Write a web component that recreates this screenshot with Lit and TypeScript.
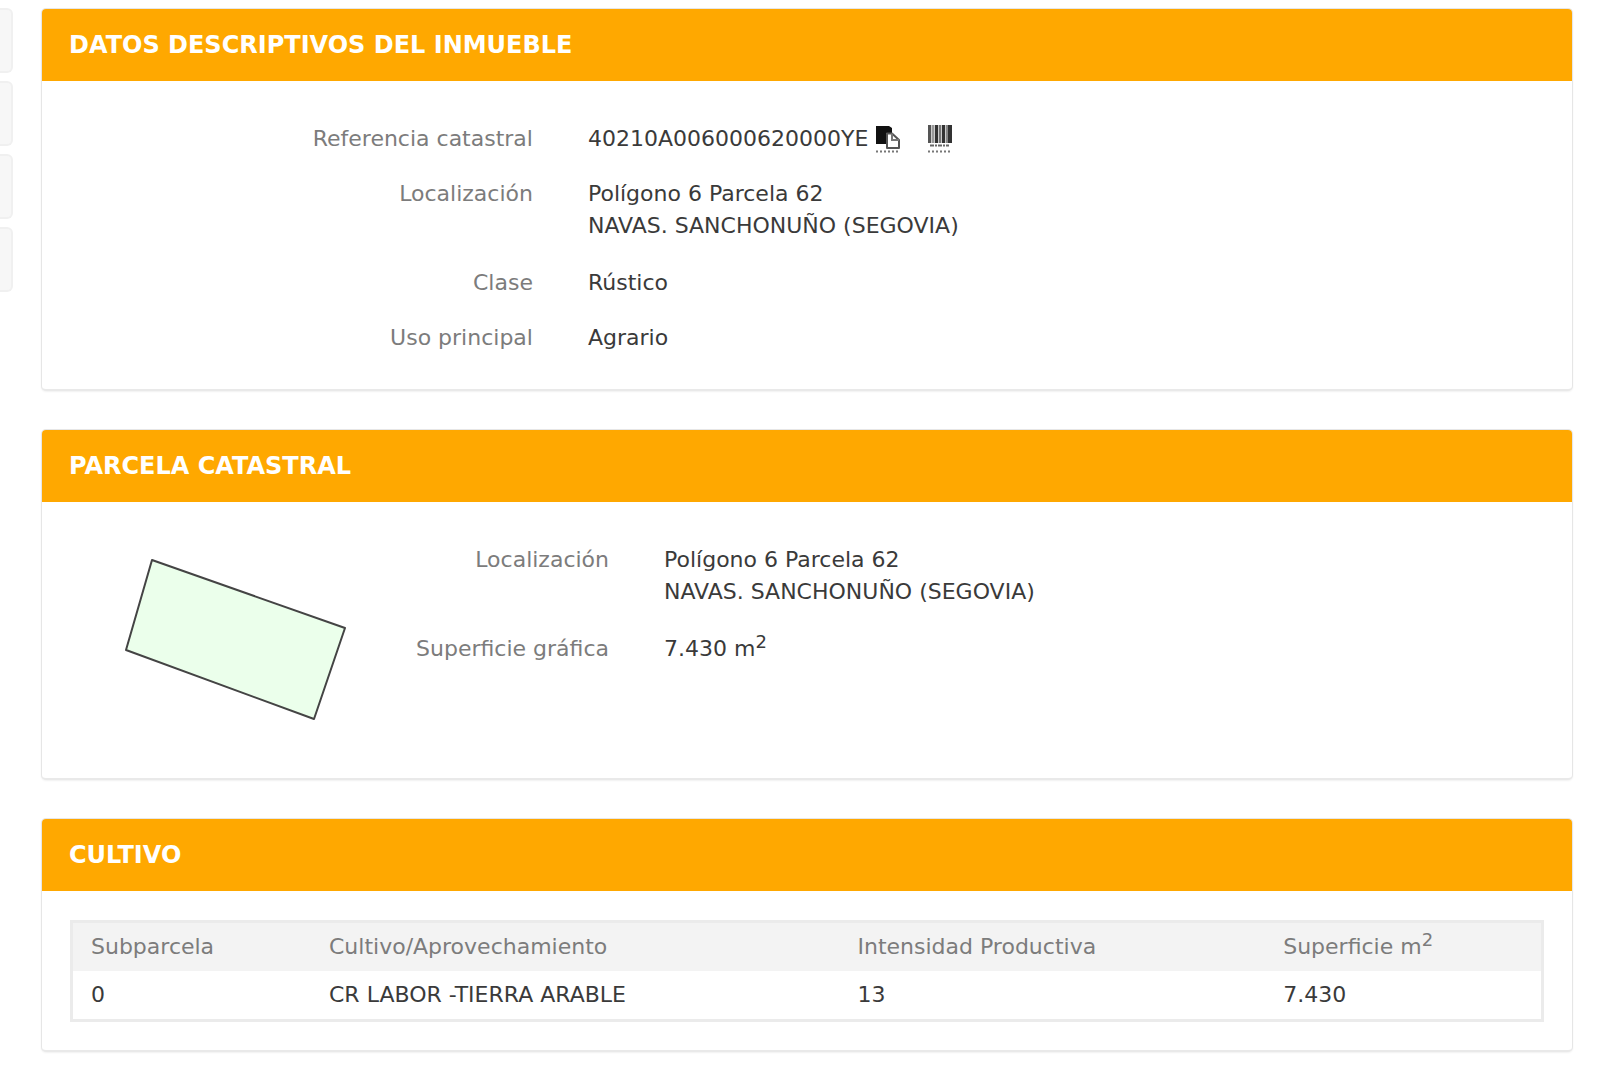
import { LitElement, html, css, svg } from "lit";
import { customElement, property } from "lit/decorators.js";

const LOCATION = ["Polígono 6 Parcela 62", "NAVAS. SANCHONUÑO (SEGOVIA)"];

const CROPS = [
  { id: "0", use: "CR LABOR -TIERRA ARABLE", intensity: "13", area: "7.430" },
];

/* x position, width and shade of each bar in the barcode glyph */
const BARS: [number, number, string][] = [
  [1, 3, "#555"],
  [5, 2, "#999"],
  [8, 3, "#333"],
  [12, 2, "#777"],
  [15, 3, "#333"],
  [19, 2, "#888"],
  [21, 4, "#333"],
];

@customElement("data-panel")
class DataPanel extends LitElement {
  @property() heading = "";

  static styles = css`
    :host {
      display: block;
      background: #fff;
      border: 1px solid #e6e6e6;
      border-bottom: 2px solid #e9e9e9;
      border-radius: 5px;
      box-shadow: 0 1px 2px rgba(0, 0, 0, 0.06);
    }
    .title {
      margin: 0;
      padding: 20px 27px;
      border-radius: 4px 4px 0 0;
      background: #ffa800;
      color: #fff;
      font-size: 24px;
      font-weight: 700;
      line-height: 32px;
    }
  `;

  render() {
    return html`
      <h2 class="title">${this.heading}</h2>
      <slot></slot>
    `;
  }
}

@customElement("app-root")
class AppRoot extends LitElement {
  static styles = css`
    :host {
      display: block;
      box-sizing: border-box;
      min-height: 100vh;
      background: #fff;
      color: #3a3a3a;
      font-family: Verdana, "DejaVu Sans", sans-serif;
      font-size: 22px;
      line-height: 32px;
    }
    .page {
      display: flex;
      gap: 28px;
      padding: 8px 25px 28px 0;
    }
    .rail {
      display: flex;
      flex: none;
      flex-direction: column;
      gap: 8px;
      width: 13px;
    }
    .tab {
      box-sizing: border-box;
      height: 65px;
      border: 2px solid #f0f0f0;
      border-left: 0;
      border-radius: 0 6px 6px 0;
      background: #f7f7f7;
    }
    .panels {
      display: flex;
      flex: 1;
      flex-direction: column;
      gap: 38px;
      min-width: 0;
    }
    .fields {
      display: grid;
      grid-template-columns: 32% 1fr;
      align-content: start;
      gap: 23px 55px;
      margin: 0;
      padding: 42px 0 35px 2px;
    }
    .fields.beside {
      grid-template-columns: 224px 1fr;
      padding: 0;
    }
    .label {
      color: #7c7c7c;
      text-align: right;
    }
    .value {
      margin: 0;
    }
    .value.lines {
      padding-bottom: 2px;
    }
    .line {
      display: block;
    }
    .reference {
      display: flex;
      align-items: center;
    }
    .action {
      display: block;
      width: 26px;
      height: 32px;
      margin-left: 7px;
      padding: 0;
      border: 0;
      background: none;
      cursor: pointer;
    }
    .action + .action {
      margin-left: 26px;
    }
    .icon {
      display: block;
    }
    .parcel {
      display: grid;
      grid-template-columns: 262px 1fr;
      gap: 0 39px;
      padding: 42px 0 54px 42px;
    }
    .map {
      display: block;
      width: 262px;
      height: 180px;
    }
    sup {
      font-size: 18px;
      line-height: 0;
    }
    .crops {
      padding: 29px 28px 28px;
    }
    .table {
      width: 100%;
      border: 3px solid #ebebeb;
      border-collapse: separate;
      border-spacing: 0;
      table-layout: fixed;
    }
    .table th,
    .table td {
      box-sizing: border-box;
      padding: 8px 18px;
      font-weight: 400;
      text-align: left;
    }
    .table th {
      background: #f3f3f3;
      color: #7c7c7c;
    }
    .table .c1 {
      width: 238px;
    }
    .table .c2 {
      width: 36%;
    }
    .table .c3 {
      width: 29%;
    }
  `;

  private location() {
    return LOCATION.map((line) => html`<span class="line">${line}</span>`);
  }

  private underline() {
    return svg`<path d="M1 28.5H25" stroke="#777" stroke-width="2" stroke-dasharray="2 2" fill="none" />`;
  }

  private copyIcon() {
    return html`
      <svg class="icon" width="26" height="32" viewBox="0 0 26 32" aria-hidden="true">
        <path d="M1 3H14L17 5V10H11V21H1Z" fill="#111" />
        <path d="M12 10.500H17L24 17V25H12Z" fill="#fff" stroke="#555" stroke-width="2" stroke-linejoin="round" />
        <path d="M17 10.500V17H24" fill="none" stroke="#777" stroke-width="2" />
        ${this.underline()}
      </svg>
    `;
  }

  private barcodeIcon() {
    return html`
      <svg class="icon" width="26" height="32" viewBox="0 0 26 32" aria-hidden="true">
        <rect x="1" y="2" width="24" height="18" fill="#ccc" />
        ${BARS.map(([x, w, shade]) => svg`<rect x=${x} y="2" width=${w} height="18" fill=${shade} />`)}
        <path d="M3 22.500H22" stroke="#666" stroke-width="2" stroke-dasharray="4 1 2 1" />
        ${this.underline()}
      </svg>
    `;
  }

  render() {
    return html`
      <div class="page">
        <div class="rail" aria-hidden="true">
          ${[0, 1, 2, 3].map(() => html`<div class="tab"></div>`)}
        </div>
        <main class="panels">
          <data-panel heading="DATOS DESCRIPTIVOS DEL INMUEBLE">
            <dl class="fields">
              <dt class="label">Referencia catastral</dt>
              <dd class="value reference">
                <span>40210A006000620000YE</span>
                <button class="action" type="button" aria-label="Copiar">${this.copyIcon()}</button>
                <button class="action" type="button" aria-label="Código de barras">${this.barcodeIcon()}</button>
              </dd>
              <dt class="label">Localización</dt>
              <dd class="value lines">${this.location()}</dd>
              <dt class="label">Clase</dt>
              <dd class="value">Rústico</dd>
              <dt class="label">Uso principal</dt>
              <dd class="value">Agrario</dd>
            </dl>
          </data-panel>

          <data-panel heading="PARCELA CATASTRAL">
            <div class="parcel">
              <svg class="map" viewBox="84 544 262 180" role="img" aria-label="Parcela">
                <path d="M152 560L345 628L314 719L126 650Z" fill="#ebffeb" stroke="#444" stroke-width="2" stroke-linejoin="round" />
              </svg>
              <dl class="fields beside">
                <dt class="label">Localización</dt>
                <dd class="value lines">${this.location()}</dd>
                <dt class="label">Superficie gráfica</dt>
                <dd class="value">7.430 m<sup>2</sup></dd>
              </dl>
            </div>
          </data-panel>

          <data-panel heading="CULTIVO">
            <div class="crops">
              <table class="table">
                <thead>
                  <tr>
                    <th class="c1" scope="col">Subparcela</th>
                    <th class="c2" scope="col">Cultivo/Aprovechamiento</th>
                    <th class="c3" scope="col">Intensidad Productiva</th>
                    <th scope="col">Superficie m<sup>2</sup></th>
                  </tr>
                </thead>
                <tbody>
                  ${CROPS.map(
                    (row) => html`
                      <tr>
                        <td>${row.id}</td>
                        <td>${row.use}</td>
                        <td>${row.intensity}</td>
                        <td>${row.area}</td>
                      </tr>
                    `,
                  )}
                </tbody>
              </table>
            </div>
          </data-panel>
        </main>
      </div>
    `;
  }
}
